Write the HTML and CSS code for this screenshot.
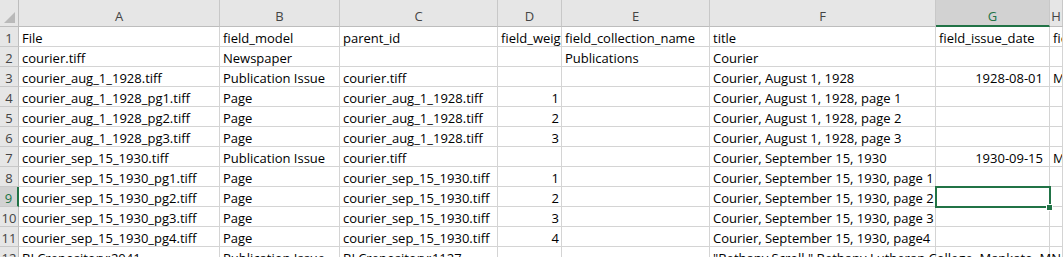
FILE: index.html
```html
<!DOCTYPE html>
<html lang="en">
<head>
  <meta charset="UTF-8">
  <title>Workbench CSV - Excel</title>
  <link rel="stylesheet" href="styles.css">
</head>
<body>
  <div class="sheet">
    <div class="row head">
      <div class="corner"><span class="tri"></span></div>
      <div class="col">A</div>
      <div class="col">B</div>
      <div class="col">C</div>
      <div class="col">D</div>
      <div class="col">E</div>
      <div class="col">F</div>
      <div class="col active">G</div>
      <div class="col">H</div>
    </div>

    <div class="row">
      <div class="num">1</div>
      <div class="cell">File</div>
      <div class="cell">field_model</div>
      <div class="cell">parent_id</div>
      <div class="cell">field_weight</div>
      <div class="cell">field_collection_name</div>
      <div class="cell">title</div>
      <div class="cell">field_issue_date</div>
      <div class="cell">field_place_published</div>
    </div>
    <div class="row">
      <div class="num">2</div>
      <div class="cell">courier.tiff</div>
      <div class="cell">Newspaper</div>
      <div class="cell"></div>
      <div class="cell"></div>
      <div class="cell">Publications</div>
      <div class="cell">Courier</div>
      <div class="cell"></div>
      <div class="cell"></div>
    </div>
    <div class="row">
      <div class="num">3</div>
      <div class="cell">courier_aug_1_1928.tiff</div>
      <div class="cell">Publication Issue</div>
      <div class="cell">courier.tiff</div>
      <div class="cell"></div>
      <div class="cell"></div>
      <div class="cell">Courier, August 1, 1928</div>
      <div class="cell date">1928-08-01</div>
      <div class="cell">Mankato, Minnesota</div>
    </div>
    <div class="row">
      <div class="num">4</div>
      <div class="cell">courier_aug_1_1928_pg1.tiff</div>
      <div class="cell">Page</div>
      <div class="cell">courier_aug_1_1928.tiff</div>
      <div class="cell number">1</div>
      <div class="cell"></div>
      <div class="cell">Courier, August 1, 1928, page 1</div>
      <div class="cell"></div>
      <div class="cell"></div>
    </div>
    <div class="row">
      <div class="num">5</div>
      <div class="cell">courier_aug_1_1928_pg2.tiff</div>
      <div class="cell">Page</div>
      <div class="cell">courier_aug_1_1928.tiff</div>
      <div class="cell number">2</div>
      <div class="cell"></div>
      <div class="cell">Courier, August 1, 1928, page 2</div>
      <div class="cell"></div>
      <div class="cell"></div>
    </div>
    <div class="row">
      <div class="num">6</div>
      <div class="cell">courier_aug_1_1928_pg3.tiff</div>
      <div class="cell">Page</div>
      <div class="cell">courier_aug_1_1928.tiff</div>
      <div class="cell number">3</div>
      <div class="cell"></div>
      <div class="cell">Courier, August 1, 1928, page 3</div>
      <div class="cell"></div>
      <div class="cell"></div>
    </div>
    <div class="row">
      <div class="num">7</div>
      <div class="cell">courier_sep_15_1930.tiff</div>
      <div class="cell">Publication Issue</div>
      <div class="cell">courier.tiff</div>
      <div class="cell"></div>
      <div class="cell"></div>
      <div class="cell">Courier, September 15, 1930</div>
      <div class="cell date">1930-09-15</div>
      <div class="cell">Mankato, Minnesota</div>
    </div>
    <div class="row">
      <div class="num">8</div>
      <div class="cell">courier_sep_15_1930_pg1.tiff</div>
      <div class="cell">Page</div>
      <div class="cell">courier_sep_15_1930.tiff</div>
      <div class="cell number">1</div>
      <div class="cell"></div>
      <div class="cell">Courier, September 15, 1930, page 1</div>
      <div class="cell"></div>
      <div class="cell"></div>
    </div>
    <div class="row">
      <div class="num current">9</div>
      <div class="cell">courier_sep_15_1930_pg2.tiff</div>
      <div class="cell">Page</div>
      <div class="cell">courier_sep_15_1930.tiff</div>
      <div class="cell number">2</div>
      <div class="cell"></div>
      <div class="cell">Courier, September 15, 1930, page 2</div>
      <div class="cell selected"><span class="handle"></span></div>
      <div class="cell"></div>
    </div>
    <div class="row">
      <div class="num">10</div>
      <div class="cell">courier_sep_15_1930_pg3.tiff</div>
      <div class="cell">Page</div>
      <div class="cell">courier_sep_15_1930.tiff</div>
      <div class="cell number">3</div>
      <div class="cell"></div>
      <div class="cell">Courier, September 15, 1930, page 3</div>
      <div class="cell"></div>
      <div class="cell"></div>
    </div>
    <div class="row">
      <div class="num">11</div>
      <div class="cell">courier_sep_15_1930_pg4.tiff</div>
      <div class="cell">Page</div>
      <div class="cell">courier_sep_15_1930.tiff</div>
      <div class="cell number">4</div>
      <div class="cell"></div>
      <div class="cell">Courier, September 15, 1930, page4</div>
      <div class="cell"></div>
      <div class="cell"></div>
    </div>
    <div class="row">
      <div class="num">12</div>
      <div class="cell">BLCrepository:2041</div>
      <div class="cell">Publication Issue</div>
      <div class="cell">BLCrepository:1127</div>
      <div class="cell"></div>
      <div class="cell"></div>
      <div class="cell spill">"Bethany Scroll," Bethany Lutheran College, Mankato, MN</div>
      <div class="cell"></div>
      <div class="cell"></div>
    </div>
  </div>
</body>
</html>
```

FILE: styles.css
```css
body {
  margin: 0;
  width: 1063px;
  height: 257px;
  overflow: hidden;
  background-color: #fff;
  font-family: "Open Sans", "Liberation Sans", sans-serif;
  font-size: 13px;
  color: #000;
}
.sheet {
  width: 1063px;
}
.row {
  display: grid;
  grid-template-columns: 19px 201px 120px 158px 64px 148px 226px 114px 1fr;
  height: 20px;
}
.row > div {
  box-sizing: border-box;
  border-right: 1px solid #d4d4d4;
  border-bottom: 1px solid #d4d4d4;
  line-height: 20px;
  white-space: nowrap;
  overflow: hidden;
}

/* column letters */
.row.head {
  height: 27px;
}
.row.head > div {
  background-color: #e6e6e6;
  color: #444;
  text-align: center;
  line-height: 20px;
  padding-top: 6px;
  border-right-color: #c8c8c8;
  border-bottom-color: #bdbdbd;
}
.row.head .corner {
  position: relative;
  border-right-color: #bdbdbd;
}
.corner .tri {
  position: absolute;
  right: 3px;
  bottom: 3px;
  width: 0;
  height: 0;
  border-left: 11px solid transparent;
  border-bottom: 11px solid #b9b9b9;
}
.row.head .active {
  background-color: #d2d2d2;
  color: #217346;
  border-bottom: 2px solid #217346;
}

/* row numbers */
.num {
  background-color: #e6e6e6;
  color: #444;
  text-align: center;
  border-right-color: #bdbdbd !important;
  border-bottom-color: #c8c8c8 !important;
  padding-top: 1px;
}
.num.current {
  background-color: #d2d2d2;
  color: #217346;
  border-right: 2px solid #217346 !important;
}

.cell {
  padding: 1px 3px 0;
}
.cell.number {
  text-align: right;
  padding-right: 2px;
}
.cell.date {
  text-align: right;
  padding-right: 6px;
}
.cell.spill {
  overflow: visible;
  position: relative;
  z-index: 1;
}
.cell.selected {
  position: relative;
  overflow: visible;
}
.cell.selected::after {
  content: "";
  position: absolute;
  top: -1px;
  left: -1px;
  right: -2px;
  bottom: -2px;
  border: 2px solid #217346;
}
.cell.selected .handle {
  position: absolute;
  right: -4px;
  bottom: -5px;
  width: 5px;
  height: 5px;
  background-color: #217346;
  border: 1px solid #fff;
  z-index: 2;
}
```
